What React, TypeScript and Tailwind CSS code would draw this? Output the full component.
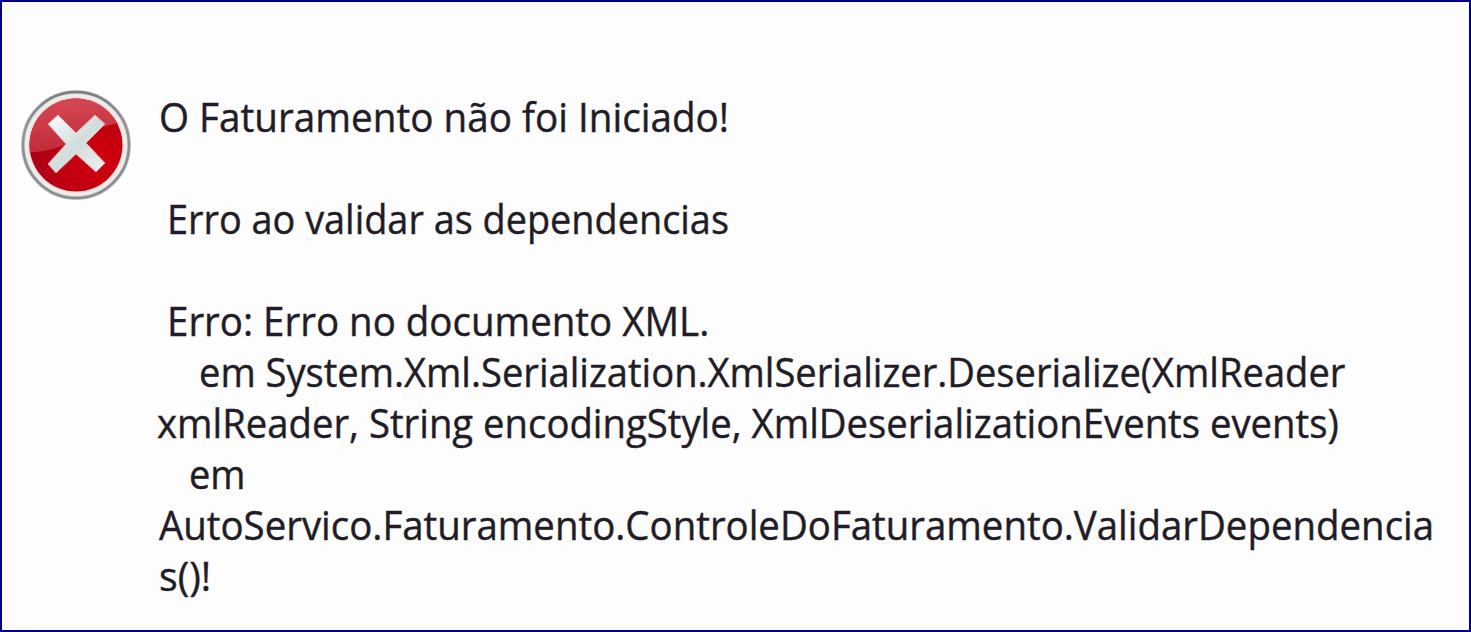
const lines = [
    { text: "O Faturamento não foi Iniciado!", className: "ml-[2px] scale-x-[0.966]" },
    { text: "", className: "" },
    { text: "Erro ao validar as dependencias", className: "ml-[10px] scale-x-[0.946]" },
    { text: "", className: "" },
    { text: "Erro: Erro no documento XML.", className: "ml-[10px] scale-x-[0.962]" },
    { text: "em System.Xml.Serialization.XmlSerializer.Deserialize(XmlReader", className: "ml-[42px] scale-x-[0.953]" },
    { text: "xmlReader, String encodingStyle, XmlDeserializationEvents events)", className: "scale-x-[0.957]" },
    { text: "em", className: "ml-[32px] scale-x-[0.95]" },
    { text: "AutoServico.Faturamento.ControleDoFaturamento.ValidarDependencia", className: "ml-[2px] scale-x-[0.96]" },
    { text: "s()!", className: "ml-[2px] scale-x-[0.98]" },
];

function ErrorIcon() {
    return (
        <svg className="mt-[-2px] h-[112px] w-[112px] shrink-0" viewBox="0 0 112 112">
            <defs>
                <linearGradient id="rim" x1="0" y1="0" x2="0" y2="1">
                    <stop offset="0" stopColor="#7b7f80" />
                    <stop offset="0.35" stopColor="#8f9394" />
                    <stop offset="1" stopColor="#85898a" />
                </linearGradient>
                <radialGradient id="ball" cx="0.75" cy="0.65" r="0.75">
                    <stop offset="0" stopColor="#d2000c" />
                    <stop offset="0.6" stopColor="#bd0011" />
                    <stop offset="1" stopColor="#a80018" />
                </radialGradient>
                <linearGradient id="gloss" x1="0.3" y1="0" x2="0.5" y2="1">
                    <stop offset="0" stopColor="#d8505a" />
                    <stop offset="1" stopColor="#c02836" />
                </linearGradient>
                <linearGradient id="cross" x1="0" y1="0" x2="1" y2="1">
                    <stop offset="0" stopColor="#ffffff" />
                    <stop offset="0.5" stopColor="#d2dcdc" />
                    <stop offset="1" stopColor="#f1f2f0" />
                </linearGradient>
                <clipPath id="disc">
                    <circle cx="56" cy="56" r="46.5" />
                </clipPath>
            </defs>
            <circle cx="56" cy="56" r="53" fill="#eeeeed" stroke="#c9cbcb" strokeWidth="4" />
            <circle cx="56" cy="56" r="53" fill="none" stroke="url(#rim)" strokeWidth="2.4" />
            <circle cx="56" cy="56" r="48.5" fill="#f6e2dc" />
            <circle cx="56" cy="56" r="46.5" fill="url(#ball)" />
            <path
                d="M0 0H112V33C88 34 70 41 54 51C40 59 28 63 0 64Z"
                fill="url(#gloss)"
                clipPath="url(#disc)"
            />
            <path
                d="M38 26L56 44L75 26L85 35L66 54L85 74L76 83L56 65L36 84L28 75L46 55L28 35Z"
                fill="url(#cross)"
                stroke="#e5a5a5"
                strokeWidth="1"
                strokeLinejoin="round"
            />
        </svg>
    );
}

export default function App() {
    return (
        <div className="flex h-[632px] w-[1471px] items-start overflow-hidden border-2 border-[#00008b] bg-[#fdfdfd] pt-[89px] pl-[18px]">
            <ErrorIcon />
            <div className="ml-[25px] font-['Open_Sans','Noto_Sans',sans-serif] text-[40px] leading-[51px] whitespace-nowrap text-[#211c26] [-webkit-text-stroke:0.4px_#211c26]">
                {lines.map((line, i) => (
                    <div key={i} className="h-[51px]">
                        <span className={`inline-block origin-left ${line.className}`}>{line.text}</span>
                    </div>
                ))}
            </div>
        </div>
    );
}
